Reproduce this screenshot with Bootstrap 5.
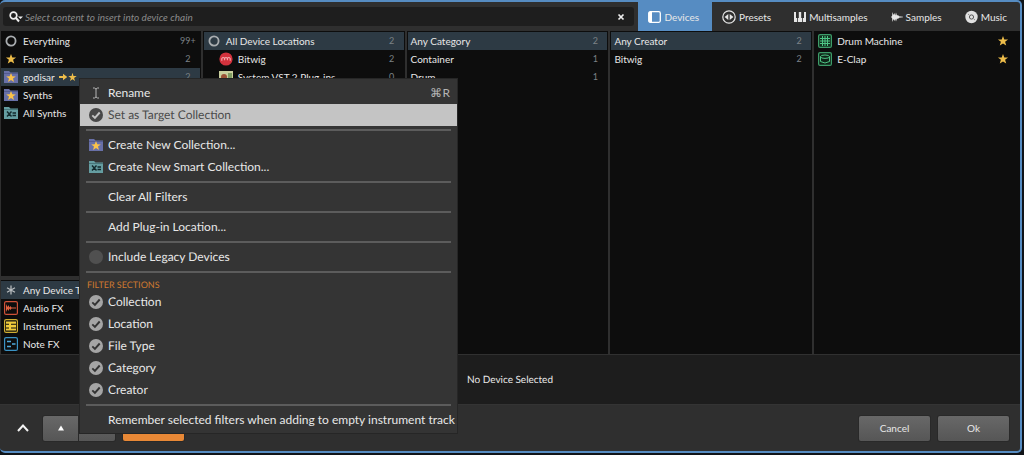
<!DOCTYPE html>
<html lang="en" data-bs-theme="dark">
<head>
<meta charset="utf-8">
<meta name="viewport" content="width=device-width, initial-scale=1">
<title>Device browser</title>
<link href="https://cdn.jsdelivr.net/npm/bootstrap@5.3.0/dist/css/bootstrap.min.css" rel="stylesheet">
<style>
  body { font: 10px/18px Lato, sans-serif; color: #e8e8e8; background: #101418; overflow: hidden; text-rendering: geometricPrecision; }
  button, input { font: inherit; color: inherit; }
  svg { flex: none; display: block; }
  .app { height: 100vh; }
  .dialog { background: #2f2f2f; border: 2px solid #568cc2; border-left: 0; border-radius: 5px; margin-right: 2px; }
  .backdrop-row { height: 2px; }
  .head { height: 29px; }
  .search { background: #1e1e1e; border-radius: 3px; margin: 5px 4px 5px 3px; padding: 0 9px 0 6px; }
  .search input { background: none; border: 0; outline: 0; padding: 0 0 0 2px; min-width: 0; }
  .search input::placeholder { color: #8b8b8b; font-style: italic; opacity: 1; }
  .tab { background: none; border: 0; padding: 0 13px 0 10px; gap: 3px; }
  .tab.active { background: #568cc2; }
  .columns { gap: 2px; background: #2f2f2f; border-bottom: 1px solid #303030; padding-left: 1px; }
  .column { flex: 1 1 0; min-width: 0; }
  .column:last-child { flex-grow: 1.02; }
  .pane { background: #0d0d0d; padding: 1px; }
  .column > .pane { padding-left: 0; }
  .entry { display: flex; align-items: center; width: 100%; height: 18px; background: none; border: 0; padding: 0 0 0 3px; text-align: left; white-space: nowrap; }
  .entry.chosen { background: #2d3a44; }
  .entry .icon { flex: none; width: 14px; margin-right: 5px; display: flex; justify-content: center; }
  .entry.child { padding-left: 15px; }
  .count { width: 24px; text-align: center; color: #7c8286; font-size: 9px; margin-left: auto; }
  .info { height: 50px; background: #1d1d1d; border-bottom: 1px solid #343434; }
  .foot { height: 46px; padding: 0 11px 0 16px; }
  .key { height: 25px; border: 0; border-radius: 2px; background: linear-gradient(#686868, #565656); box-shadow: 0 0 0 1px #292929; }
  .key.wide { width: 71px; }
  .key.orange { width: 61px; background: #e88836; }
  .key.left { width: 36px; border-radius: 2px 0 0 2px; }
  .key.right { width: 36px; border-radius: 0 2px 2px 0; }
  .chevron { background: none; border: 0; padding: 0; }
  .fold { margin-right: 13px; }
  .context { position: absolute; left: 80px; top: 79px; width: 377px; padding: 3px 0 2px; background: #343434; box-shadow: 0 0 0 1px #262626; font-size: 12px; line-height: 22px; color: #e8e8e8; }
  .choice { display: flex; align-items: center; width: 100%; height: 22px; background: none; border: 0; padding: 0 7px 0 9px; text-align: left; white-space: nowrap; }
  .choice .icon { flex: none; width: 14px; margin-right: 5px; display: flex; justify-content: center; }
  .choice.hot { background: #c4c4c4; color: #4a4a4a; }
  .choice.long { padding-right: 0; }
  .shortcut { color: #b4b4b4; }
  .context hr { margin: 3px 6px; border: 0; height: 2px; background: #5c5c5c; opacity: 1; }
  .tick { appearance: none; flex: none; width: 14px; height: 14px; margin: 0 5px 0 0; border-radius: 50%; background: #505050; }
  .tick:checked { background: #a5a5a5 url("data:image/svg+xml,%3Csvg xmlns='http://www.w3.org/2000/svg' viewBox='0 0 14 14'%3E%3Cpath d='M3.3 7.4l2.6 2.5 4.8-5.4' fill='none' stroke='%23343434' stroke-width='1.9'/%3E%3C/svg%3E"); }
  .hot .tick:checked { background: #484848 url("data:image/svg+xml,%3Csvg xmlns='http://www.w3.org/2000/svg' viewBox='0 0 14 14'%3E%3Cpath d='M3.3 7.4l2.6 2.5 4.8-5.4' fill='none' stroke='%23c4c4c4' stroke-width='1.9'/%3E%3C/svg%3E"); }
  .section-name { font-size: 9px; line-height: 17px; height: 15px; color: #d07a30; padding-left: 7px; }
</style>
</head>
<body>
<svg width="0" height="0" class="position-absolute" aria-hidden="true">
  <symbol id="ring" viewBox="0 0 14 14"><circle cx="7" cy="7" r="4.600" fill="none" stroke="#a9adb0" stroke-width="1.800"/></symbol>
  <symbol id="star" viewBox="0 0 14 14"><path d="M7 1.900l1.300 3.500 3.800.1-3 2.300 1.100 3.700L7 9.400l-3.200 2.100 1.100-3.700-3-2.300 3.800-.1z" fill="#eebd4a"/></symbol>
  <symbol id="folder" viewBox="0 0 14 14"><path d="M0 1h5l1.500 1.500H14V13H0z" fill="#6870a8"/><path d="M0 3.500h14" stroke="#535b90"/><path d="M7 3l1.300 3.300 3.500.1-2.800 2.100 1 3.400L7 10l-3 1.900 1-3.400-2.800-2.100 3.500-.1z" fill="#fac24a"/></symbol>
  <symbol id="smart" viewBox="0 0 14 14"><path d="M0 1h5l1.500 1.500H14V13H0z" fill="#659da1"/><path d="M0 3.500h14" stroke="#48777b"/><path d="M3 5.500l4.500 5M7.500 5.500L3 10.500M8.500 7H12M8.500 9.500H12" stroke="#12292c" stroke-width="1.400"/></symbol>
</svg>

<div class="app d-flex flex-column position-relative">
  <main class="dialog d-flex flex-column flex-grow-1 overflow-hidden">
    <header class="head d-flex">
      <div class="search d-flex align-items-center flex-grow-1">
        <svg width="14" height="14" viewBox="0 0 14 14" aria-hidden="true"><circle cx="4.500" cy="5.500" r="3.300" fill="none" stroke="#eee" stroke-width="1.700"/><path d="M7 8l3 3.500" stroke="#eee" stroke-width="2"/><path d="M9 6.500h5L11.500 9z" fill="#eee"/></svg>
        <input type="text" class="flex-grow-1" aria-label="Search" placeholder="Select content to insert into device chain">
        <button class="chevron" aria-label="Clear search"><svg width="8" height="8" viewBox="0 0 8 8"><path d="M1.500 1.500l5 5M6.500 1.500l-5 5" stroke="#eee" stroke-width="1.700"/></svg></button>
      </div>
      <nav class="d-flex">
        <button class="tab active d-flex align-items-center"><svg width="13" height="14" viewBox="0 0 13 14"><rect x=".7" y="1.700" width="11.600" height="10.600" rx="1.500" fill="none" stroke="#fff" stroke-width="1.300"/><path d="M1 2h3v10H1z" fill="#fff"/></svg>Devices</button>
        <button class="tab d-flex align-items-center"><svg width="14" height="14" viewBox="0 0 14 14"><circle cx="7" cy="7" r="6.200" fill="none" stroke="#e6e6e6" stroke-width="1.200"/><path d="M6.300 4v6L2.600 7zM7.700 4v6l3.700-3z" fill="#e6e6e6"/></svg>Presets</button>
        <button class="tab d-flex align-items-center"><svg width="12" height="14" viewBox="0 0 12 14"><path d="M0 2h2v6h1.200v4H0zM4 8h.8V2h2.400v6H8v4H4zM10 2h2v10H8.800V8H10z" fill="#e6e6e6"/></svg>Multisamples</button>
        <button class="tab d-flex align-items-center"><svg width="12" height="14" viewBox="0 0 12 14"><path d="M0 6.500h1L1.500 2l1 3L3.300 3l.9 2.500L5 2.500l1 3L7 5l1 1.300 4 .4v.6l-4 .5L7 9l-1-.5-1 3L4.200 9l-.9 2-.8-2-1 3L1 7.500H0z" fill="#e6e6e6"/></svg>Samples</button>
        <button class="tab d-flex align-items-center"><svg width="13" height="14" viewBox="0 0 13 14"><circle cx="6.500" cy="7" r="6.200" fill="#e0e0e0"/><circle cx="6.500" cy="7" r="2.100" fill="none" stroke="#555"/><path d="M3 4l1.300 1M10 10L8.700 9" stroke="#888"/></svg>Music</button>
      </nav>
    </header>

    <div class="columns d-flex flex-grow-1">
      <div class="column d-flex flex-column">
        <section class="pane flex-grow-1">
          <button class="entry"><span class="icon"><svg width="14" height="14"><use href="#ring"/></svg></span>Everything<span class="count">99+</span></button>
          <button class="entry"><span class="icon"><svg width="14" height="14"><use href="#star"/></svg></span>Favorites<span class="count">2</span></button>
          <button class="entry chosen"><span class="icon"><svg width="14" height="14"><use href="#folder"/></svg></span>godisar
            <svg width="18" height="10" viewBox="0 0 18 10" class="ms-1"><path d="M0 4h4V1.800L8.300 5 4 8.200V6H0z" fill="#eebd4a"/><path d="M13.500.8l1 3.100 3.200.1-2.600 1.900.9 3.100-2.500-1.800L11 9l.9-3.100L9.300 4l3.200-.1z" fill="#eebd4a"/></svg>
            <span class="count">2</span></button>
          <button class="entry"><span class="icon"><svg width="14" height="14"><use href="#folder"/></svg></span>Synths</button>
          <button class="entry"><span class="icon"><svg width="14" height="14"><use href="#smart"/></svg></span>All Synths</button>
        </section>
        <section class="pane mt-1">
          <button class="entry chosen"><span class="icon"><svg width="10" height="10" viewBox="0 0 10 10"><path d="M5 .5v9M1 2.800l8 4.400M9 2.800L1 7.200" stroke="#b6babd" stroke-width="1.300"/></svg></span>Any Device Type</button>
          <button class="entry"><span class="icon"><svg width="14" height="14" viewBox="0 0 14 14"><rect x=".6" y=".6" width="12.800" height="12.800" rx="1.500" fill="none" stroke="#cf5238" stroke-width="1.200"/><path d="M2 7V3l1.500 3L4.500 4l1 2.500L6.500 5l1 1.500H12v1H7.500L6.500 9l-1-1.500-1 2.500-1-2L2 11z" fill="#e0603f"/></svg></span>Audio FX</button>
          <button class="entry"><span class="icon"><svg width="14" height="14" viewBox="0 0 14 14"><rect x=".6" y=".6" width="12.800" height="12.800" rx="1.500" fill="none" stroke="#d0ae32" stroke-width="1.200"/><path d="M2 2.500h10v2.300H7v1h5v2.700H7v1h5v2H2v-2h3v-1H2V5.800h3v-1H2z" fill="#f0cb3c"/></svg></span>Instrument</button>
          <button class="entry"><span class="icon"><svg width="14" height="14" viewBox="0 0 14 14"><rect x=".6" y=".6" width="12.800" height="12.800" rx="1.500" fill="none" stroke="#3b93c4" stroke-width="1.200"/><path d="M3 4.500h4M3 9.500h4M8 7h3.500" stroke="#4fabdc" stroke-width="1.300"/></svg></span>Note FX</button>
        </section>
      </div>
      <section class="column pane">
        <button class="entry chosen"><span class="icon"><svg width="14" height="14"><use href="#ring"/></svg></span>All Device Locations<span class="count">2</span></button>
        <button class="entry child"><span class="icon"><svg width="14" height="14" viewBox="0 0 14 14"><circle cx="7" cy="7" r="6.600" fill="#d3323d"/><path d="M2.800 8.800V6.500q1.400-2 2.800 0 1.400-2 2.800 0 1.400-2 2.800 0v2.300M5.600 6.500v1.800M8.400 6.500v1.800" fill="none" stroke="#f4a9ac" stroke-width="1.100"/></svg></span>Bitwig<span class="count">2</span></button>
        <button class="entry child"><span class="icon"><svg width="14" height="14" viewBox="0 0 14 14"><path d="M0 1h14v12H0z" fill="#c9cf9d"/><circle cx="5" cy="7" r="3" fill="#9b5236"/><path d="M9 3h4v5H9z" fill="#7f9c63"/></svg></span>System VST 2 Plug-ins<span class="count">0</span></button>
      </section>
      <section class="column pane">
        <button class="entry chosen">Any Category<span class="count">2</span></button>
        <button class="entry">Container<span class="count">1</span></button>
        <button class="entry">Drum<span class="count">1</span></button>
      </section>
      <section class="column pane">
        <button class="entry chosen">Any Creator<span class="count">2</span></button>
        <button class="entry">Bitwig<span class="count">2</span></button>
      </section>
      <section class="column pane">
        <button class="entry"><span class="icon"><svg width="14" height="14" viewBox="0 0 14 14"><rect x=".6" y=".6" width="12.800" height="12.800" rx="1.500" fill="#11301f" stroke="#3d9c69" stroke-width="1.200"/><path d="M2 4.500h10M2 7h10M2 9.500h10M4.500 2v10M7 2v10M9.500 2v10" stroke="#4ec585" stroke-width="1"/></svg></span>Drum Machine<span class="count me-1"><svg width="14" height="14" class="mx-auto"><use href="#star"/></svg></span></button>
        <button class="entry"><span class="icon"><svg width="14" height="14" viewBox="0 0 14 14"><rect x=".6" y=".6" width="12.800" height="12.800" rx="1.500" fill="#0f2418" stroke="#3d9c69" stroke-width="1.200"/><path d="M2.500 4.500v5q4.500 3 9 0v-5" fill="none" stroke="#4ec585"/><ellipse cx="7" cy="4.700" rx="4.500" ry="1.700" fill="none" stroke="#4ec585"/></svg></span>E-Clap<span class="count me-1"><svg width="14" height="14" class="mx-auto"><use href="#star"/></svg></span></button>
      </section>
    </div>

    <div class="info d-flex align-items-center justify-content-center">No Device Selected</div>

    <footer class="foot d-flex align-items-center">
      <button class="chevron fold" aria-label="Collapse"><svg width="14" height="10" viewBox="0 0 14 10"><path d="M2 8l5-5.500L12 8" fill="none" stroke="#f2f2f2" stroke-width="2"/></svg></button>
      <button class="key left" aria-label="Previous"><svg width="8" height="6" viewBox="0 0 8 6" class="mx-auto"><path d="M1 5.500L4 .5l3 5z" fill="#fff"/></svg></button>
      <button class="key right me-2" aria-label="Next"></button>
      <button class="key orange me-auto" aria-label="Browse"></button>
      <button class="key wide me-2">Cancel</button>
      <button class="key wide">Ok</button>
    </footer>
  </main>
  <div class="backdrop-row"></div>

  <div class="context">
    <button class="choice"><span class="icon"><svg width="8" height="12" viewBox="0 0 8 12"><path d="M1 1h1.500L4 2l1.500-1H7M4 2v8M1 11h1.500L4 10l1.500 1H7" fill="none" stroke="#b5b5b5"/></svg></span>Rename<span class="shortcut ms-auto">⌘R</span></button>
    <label class="choice hot"><input type="checkbox" class="tick" checked>Set as Target Collection</label>
    <hr>
    <button class="choice"><span class="icon"><svg width="14" height="14"><use href="#folder"/></svg></span>Create New Collection...</button>
    <button class="choice"><span class="icon"><svg width="14" height="14"><use href="#smart"/></svg></span>Create New Smart Collection...</button>
    <hr>
    <button class="choice"><span class="icon"></span>Clear All Filters</button>
    <hr>
    <button class="choice"><span class="icon"></span>Add Plug-in Location...</button>
    <hr>
    <label class="choice"><input type="checkbox" class="tick">Include Legacy Devices</label>
    <hr>
    <div class="section-name">FILTER SECTIONS</div>
    <label class="choice"><input type="checkbox" class="tick" checked>Collection</label>
    <label class="choice"><input type="checkbox" class="tick" checked>Location</label>
    <label class="choice"><input type="checkbox" class="tick" checked>File Type</label>
    <label class="choice"><input type="checkbox" class="tick" checked>Category</label>
    <label class="choice"><input type="checkbox" class="tick" checked>Creator</label>
    <hr>
    <button class="choice long"><span class="icon"></span>Remember selected filters when adding to empty instrument track</button>
  </div>
</div>
<script src="https://cdn.jsdelivr.net/npm/bootstrap@5.3.0/dist/js/bootstrap.bundle.min.js"></script>
</body>
</html>
